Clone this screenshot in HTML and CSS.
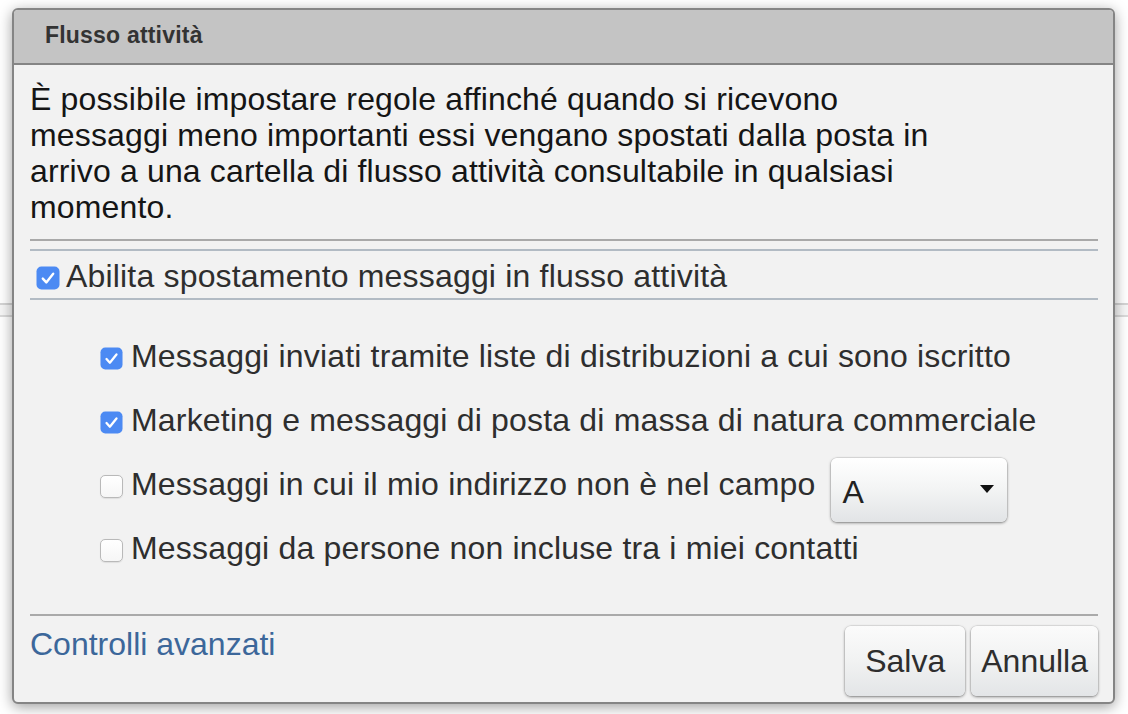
FILE: index.html
```html
<!DOCTYPE html>
<html lang="it">
<head>
<meta charset="utf-8">
<title>Flusso attività</title>
<link rel="stylesheet" href="styles.css">
</head>
<body>
<div class="backdrop-band"></div>

<div class="dialog">
  <div class="dialog-header">Flusso attività</div>
  <div class="dialog-body">
    <div class="intro">
      <p class="intro-text">È possibile impostare regole affinché quando si ricevono messaggi meno importanti essi vengano spostati dalla posta in arrivo a una cartella di flusso attività consultabile in qualsiasi momento.</p>
    </div>

    <div class="enable-row">
      <span class="cb cb-main checked">
        <svg viewBox="0 0 24 24" width="24" height="24"><rect x="0.5" y="0.5" width="23" height="23" rx="5" fill="#4c8af3"/><path d="M6.8 12.6 L10.3 16.4 L17.2 7.8" fill="none" stroke="#fff" stroke-width="2.4" stroke-linecap="round" stroke-linejoin="round"/></svg>
      </span>
      <span class="label">Abilita spostamento messaggi in flusso attività</span>
    </div>

    <div class="options">
      <div class="opt-row">
        <span class="cb checked">
          <svg viewBox="0 0 24 24" width="23" height="23"><rect x="0.5" y="0.5" width="23" height="23" rx="5" fill="#4c8af3"/><path d="M6.8 12.6 L10.3 16.4 L17.2 7.8" fill="none" stroke="#fff" stroke-width="2.4" stroke-linecap="round" stroke-linejoin="round"/></svg>
        </span>
        <span class="label">Messaggi inviati tramite liste di distribuzioni a cui sono iscritto</span>
      </div>
      <div class="opt-row">
        <span class="cb checked">
          <svg viewBox="0 0 24 24" width="23" height="23"><rect x="0.5" y="0.5" width="23" height="23" rx="5" fill="#4c8af3"/><path d="M6.8 12.6 L10.3 16.4 L17.2 7.8" fill="none" stroke="#fff" stroke-width="2.4" stroke-linecap="round" stroke-linejoin="round"/></svg>
        </span>
        <span class="label">Marketing e messaggi di posta di massa di natura commerciale</span>
      </div>
      <div class="opt-row">
        <span class="cb unchecked"></span>
        <span class="label">Messaggi in cui il mio indirizzo non è nel campo</span>
        <div class="select">
          <span class="select-value">A</span>
          <svg class="select-arrow" viewBox="0 0 14 8" width="14" height="8"><path d="M0 0 H14 L7 8 Z" fill="#111"/></svg>
        </div>
      </div>
      <div class="opt-row">
        <span class="cb unchecked"></span>
        <span class="label">Messaggi da persone non incluse tra i miei contatti</span>
      </div>
    </div>

    <div class="footer">
      <a class="adv-link" href="#">Controlli avanzati</a>
      <div class="buttons">
        <button class="btn">Salva</button>
        <button class="btn">Annulla</button>
      </div>
    </div>
  </div>
</div>
</body>
</html>
```

FILE: styles.css
```css
html, body {
  margin: 0;
  padding: 0;
  background: #ffffff;
  font-family: "Liberation Sans", Arial, Helvetica, sans-serif;
}

body {
  width: 1128px;
  height: 714px;
  overflow: hidden;
  position: relative;
}

.backdrop-band {
  margin-top: 303px;
  height: 10px;
  border-top: 2px solid #d4d4d4;
  border-bottom: 2px solid #dadada;
  background: #f6f6f6;
}

.dialog {
  position: absolute;
  left: 12px;
  top: 8px;
  width: 1103px;
  height: 696px;
  box-sizing: border-box;
  border: 2px solid #858585;
  border-radius: 6px;
  background: #f2f2f2;
  box-shadow: 0 3px 14px rgba(0, 0, 0, 0.38);
  overflow: hidden;
  display: flex;
  flex-direction: column;
}

.dialog-header {
  height: 53px;
  line-height: 51px;
  background: #c4c4c4;
  border-bottom: 2px solid #858585;
  padding-left: 31px;
  font-size: 23px;
  font-weight: bold;
  letter-spacing: 0.2px;
  color: #333333;
}

.dialog-body {
  padding: 16px 15px 6px 16px;
  display: flex;
  flex-direction: column;
}

.intro {
  margin: 0 0 8px 0;
  padding-bottom: 14px;
  border-bottom: 2px solid #a9a9a9;
}

.intro-text {
  margin: 0;
  max-width: 930px;
  font-size: 32px;
  line-height: 36px;
  letter-spacing: 0.15px;
  color: #151515;
}

.enable-row {
  display: flex;
  align-items: center;
  box-sizing: border-box;
  height: 51px;
  padding-top: 6px;
  border-top: 2px solid #b2bbc4;
  border-bottom: 2px solid #b2bbc4;
}

.label {
  font-size: 32px;
  letter-spacing: 0.18px;
  color: #2e2e2e;
  white-space: nowrap;
  padding-bottom: 3px;
}

.cb {
  display: inline-flex;
  flex: none;
  width: 23px;
  height: 23px;
}

.cb-main {
  width: 24px;
  height: 24px;
  margin-left: 6px;
  margin-right: 6px;
}

.options {
  padding: 26px 0 32px 70px;
  display: flex;
  flex-direction: column;
}

.opt-row {
  height: 64px;
  display: flex;
  align-items: center;
}

.opt-row .cb {
  margin-right: 8px;
}

.cb.unchecked {
  box-sizing: border-box;
  border: 1px solid #b9b9b9;
  border-radius: 5px;
  background: linear-gradient(#ffffff, #f6f6f6);
  box-shadow: 0 0.5px 1px rgba(0, 0, 0, 0.08);
}

.select {
  align-self: flex-start;
  margin-top: 4px;
  margin-left: 15px;
  width: 176px;
  height: 64px;
  box-sizing: border-box;
  border-radius: 6px;
  background: linear-gradient(#ffffff 0%, #f4f5f5 45%, #e2e4e6 100%);
  box-shadow: 0 1px 3px rgba(0, 0, 0, 0.45), 0 0 0 0.5px rgba(0, 0, 0, 0.12);
  display: flex;
  align-items: center;
  justify-content: space-between;
  padding: 4px 13px 0 12px;
}

.select-value {
  font-size: 32px;
  color: #222222;
}

.select-arrow {
  display: block;
  margin-top: -6px;
}

.footer {
  border-top: 2px solid #aaaaaa;
  padding-top: 10px;
  display: flex;
  justify-content: space-between;
  align-items: flex-start;
}

.adv-link {
  font-size: 32px;
  color: #3c679a;
  text-decoration: none;
  line-height: 37px;
}

.buttons {
  display: flex;
  gap: 6px;
}

.btn {
  font-family: "Liberation Sans", Arial, Helvetica, sans-serif;
  font-size: 32px;
  color: #2e2e2e;
  height: 70px;
  min-width: 120px;
  padding: 0 10px;
  border: none;
  border-radius: 6px;
  background: linear-gradient(#fbfbfb 0%, #f1f2f2 50%, #e3e5e7 100%);
  box-shadow: 0 1px 3px rgba(0, 0, 0, 0.45), 0 0 0 0.5px rgba(0, 0, 0, 0.1);
}
```
